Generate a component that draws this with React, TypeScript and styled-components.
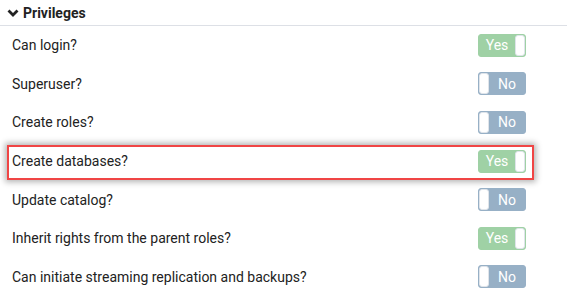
import React from 'react';
import styled, { createGlobalStyle } from 'styled-components';

const GlobalStyle = createGlobalStyle`
  body {
    margin: 0;
    background: #fff;
    font-family: Roboto, "Liberation Sans", sans-serif;
    color: #222;
  }
`;

const Panel = styled.div`
  width: 567px;
  height: 300px;
  overflow: hidden;
`;

const Header = styled.div`
  display: flex;
  align-items: center;
  gap: 4px;
  height: 25px;
  padding-left: 7px;
  border-bottom: 1px solid #dde0e6;
  font-size: 14px;
  font-weight: 700;
  color: #222;

  svg {
    width: 12px;
    height: 12px;
  }
`;

const List = styled.div`
  display: flex;
  flex-direction: column;
`;

const Row = styled.div<{ $highlighted?: boolean }>`
  position: relative;
  display: flex;
  align-items: center;
  justify-content: space-between;
  height: 38.6px;
  padding: 0 41px 0 12px;
  font-size: 14px;
  color: #222;

  &::after {
    content: '';
    display: ${(p) => (p.$highlighted ? 'block' : 'none')};
    position: absolute;
    left: 7px;
    right: 33px;
    top: 3px;
    bottom: 0;
    border: 2px solid #f04545;
    box-shadow: 0 0 6px 2px rgba(0, 0, 0, 0.3);
    pointer-events: none;
  }
`;

const Toggle = styled.div<{ $on: boolean }>`
  display: flex;
  flex-direction: ${(p) => (p.$on ? 'row' : 'row-reverse')};
  align-items: stretch;
  width: 48px;
  height: 23px;
  box-sizing: border-box;
  border-radius: 3px;
  border: 1px solid ${(p) => (p.$on ? '#9fd1a5' : '#97b0c6')};
  background: ${(p) => (p.$on ? '#9fd1a5' : '#97b0c6')};
  overflow: hidden;
`;

const ToggleLabel = styled.span`
  flex: 1;
  display: flex;
  align-items: center;
  justify-content: center;
  color: #fff;
  font-size: 14px;
`;

const Handle = styled.span`
  width: 8px;
  background: #fff;
  border-radius: 3px;
  border: 1px solid #dfe4ea;
`;

const privileges = [
  { label: 'Can login?', on: true },
  { label: 'Superuser?', on: false },
  { label: 'Create roles?', on: false },
  { label: 'Create databases?', on: true, highlighted: true },
  { label: 'Update catalog?', on: false },
  { label: 'Inherit rights from the parent roles?', on: true },
  { label: 'Can initiate streaming replication and backups?', on: false },
];

const App: React.FC = () => (
  <>
    <GlobalStyle />
    <Panel>
      <Header>
        <svg viewBox="0 0 12 12">
          <path d="M1.5 3.5 L6 8 L10.5 3.5" fill="none" stroke="#222" strokeWidth="2.8" />
        </svg>
        Privileges
      </Header>
      <List>
        {privileges.map((item) => (
          <Row key={item.label} $highlighted={item.highlighted}>
            <span>{item.label}</span>
            <Toggle $on={item.on}>
              <ToggleLabel>{item.on ? 'Yes' : 'No'}</ToggleLabel>
              <Handle />
            </Toggle>
          </Row>
        ))}
      </List>
    </Panel>
  </>
);

export default App;
